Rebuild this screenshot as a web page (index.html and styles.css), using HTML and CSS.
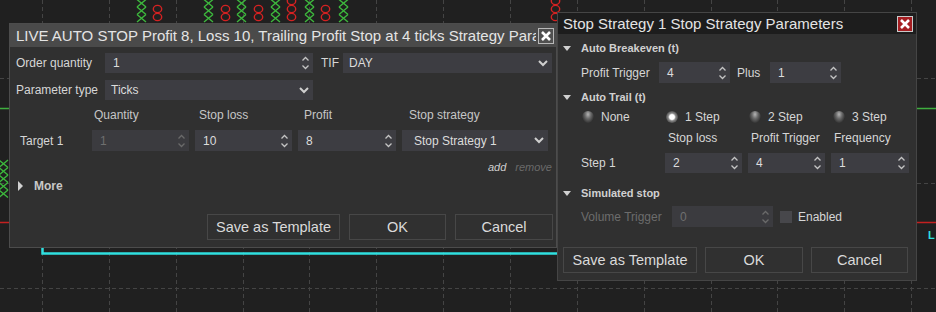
FILE: index.html
```html
<!DOCTYPE html>
<html lang="en">
<head>
  <meta charset="UTF-8">
  <title>Stop Strategy Parameters</title>
  <link rel="stylesheet" href="styles.css">
</head>
<body>
  <!-- chart behind the dialogs -->
  <svg class="chart" width="936" height="312" viewBox="0 0 936 312">
    <defs>
      <path id="px" d="M0 0 L9 7.5 M9 0 L0 7.5"/>
      <ellipse id="po" cx="4.5" cy="4" rx="4.2" ry="3.6"/>
    </defs>
    <g class="grid">
      <line x1="42.5" y1="0" x2="42.5" y2="312"/>
      <line x1="109.5" y1="0" x2="109.5" y2="312"/>
      <line x1="176.5" y1="0" x2="176.5" y2="312"/>
      <line x1="243.5" y1="0" x2="243.5" y2="312"/>
      <line x1="309.5" y1="0" x2="309.5" y2="312"/>
      <line x1="376.5" y1="0" x2="376.5" y2="312"/>
      <line x1="443.5" y1="0" x2="443.5" y2="312"/>
      <line x1="510.5" y1="0" x2="510.5" y2="312"/>
      <line x1="577.5" y1="0" x2="577.5" y2="312"/>
      <line x1="644.5" y1="0" x2="644.5" y2="312"/>
      <line x1="711.5" y1="0" x2="711.5" y2="312"/>
      <line x1="777.5" y1="0" x2="777.5" y2="312"/>
      <line x1="844.5" y1="0" x2="844.5" y2="312"/>
      <line x1="911.5" y1="0" x2="911.5" y2="312"/>
      <line x1="0" y1="78.5" x2="936" y2="78.5"/>
      <line x1="0" y1="183.5" x2="936" y2="183.5"/>
      <line x1="0" y1="288.5" x2="936" y2="288.5"/>
    </g>
    <line class="green-line" x1="0" y1="108.5" x2="936" y2="108.5"/>
    <line class="red-line" x1="0" y1="222.5" x2="936" y2="222.5"/>
    <polyline class="cyan-line" points="42.5,247 42.5,253.5 560,253.5"/>
    <text class="cyan-label" x="928" y="239">L</text>

    <g class="xs">
      <use href="#px" x="137" y="-0.5"/><use href="#px" x="137" y="7"/><use href="#px" x="137" y="14.5"/>
      <use href="#px" x="204" y="-0.5"/><use href="#px" x="204" y="7"/><use href="#px" x="204" y="14.5"/>
      <use href="#px" x="237" y="-0.5"/><use href="#px" x="237" y="7"/><use href="#px" x="237" y="14.5"/>
      <use href="#px" x="271" y="-0.5"/><use href="#px" x="271" y="7"/><use href="#px" x="271" y="14.5"/>
      <use href="#px" x="305" y="-0.5"/><use href="#px" x="305" y="7"/><use href="#px" x="305" y="14.5"/>
      <use href="#px" x="339" y="-0.5"/><use href="#px" x="339" y="7"/><use href="#px" x="339" y="14.5"/>
      <use href="#px" x="-1" y="160"/><use href="#px" x="-1" y="167.5"/><use href="#px" x="-1" y="175"/>
      <use href="#px" x="-1" y="182.5"/><use href="#px" x="-1" y="190"/>
    </g>
    <g class="os">
      <use href="#po" x="153" y="5"/><use href="#po" x="153" y="13"/>
      <use href="#po" x="221" y="5"/><use href="#po" x="221" y="13"/>
      <use href="#po" x="254" y="5"/><use href="#po" x="254" y="13"/>
      <use href="#po" x="287" y="-3"/><use href="#po" x="287" y="5"/><use href="#po" x="287" y="13"/>
      <use href="#po" x="321" y="5"/><use href="#po" x="321" y="13"/>
      <use href="#po" x="551" y="-3"/><use href="#po" x="551" y="5"/><use href="#po" x="551" y="13"/>
    </g>
  </svg>

  <!-- order dialog -->
  <div class="dialog order-dialog">
    <div class="title-bar">
      <span class="title">LIVE AUTO STOP Profit 8, Loss 10, Trailing Profit Stop at 4 ticks Strategy Parameters</span>
      <span class="close-button">
        <svg width="10" height="10" viewBox="0 0 10 10"><path d="M1 1 L9 9 M9 1 L1 9"/></svg>
      </span>
    </div>
    <div class="dialog-body">
      <div class="form-row">
        <span class="row-label">Order quantity</span>
        <div class="field spin w208">
          <span>1</span>
          <svg class="arrows" width="7" height="14" viewBox="0 0 7 14"><path d="M0.5 4.5 L3.5 1.5 L6.5 4.5 M0.5 9.5 L3.5 12.5 L6.5 9.5"/></svg>
        </div>
        <span class="tif-label">TIF</span>
        <div class="field select w209">
          <span>DAY</span>
          <svg class="chevron" width="10" height="7" viewBox="0 0 10 7"><path d="M1 1 L5 5 L9 1"/></svg>
        </div>
      </div>
      <div class="form-row gap7">
        <span class="row-label">Parameter type</span>
        <div class="field select w208">
          <span>Ticks</span>
          <svg class="chevron" width="10" height="7" viewBox="0 0 10 7"><path d="M1 1 L5 5 L9 1"/></svg>
        </div>
      </div>

      <div class="target-grid target-head">
        <span></span>
        <span>Quantity</span>
        <span>Stop loss</span>
        <span>Profit</span>
        <span>Stop strategy</span>
      </div>
      <div class="target-grid target-row">
        <span class="target-label">Target 1</span>
        <div class="field spin disabled">
          <span>1</span>
          <svg class="arrows" width="7" height="14" viewBox="0 0 7 14"><path d="M0.5 4.5 L3.5 1.5 L6.5 4.5 M0.5 9.5 L3.5 12.5 L6.5 9.5"/></svg>
        </div>
        <div class="field spin">
          <span>10</span>
          <svg class="arrows" width="7" height="14" viewBox="0 0 7 14"><path d="M0.5 4.5 L3.5 1.5 L6.5 4.5 M0.5 9.5 L3.5 12.5 L6.5 9.5"/></svg>
        </div>
        <div class="field spin">
          <span>8</span>
          <svg class="arrows" width="7" height="14" viewBox="0 0 7 14"><path d="M0.5 4.5 L3.5 1.5 L6.5 4.5 M0.5 9.5 L3.5 12.5 L6.5 9.5"/></svg>
        </div>
        <div class="field select roomy">
          <span>Stop Strategy 1</span>
          <svg class="chevron" width="10" height="7" viewBox="0 0 10 7"><path d="M1 1 L5 5 L9 1"/></svg>
        </div>
      </div>

      <div class="links">
        <span class="link">add</span>
        <span class="link off">remove</span>
      </div>
      <div class="more">
        <span class="tri-right"></span>
        <span>More</span>
      </div>

      <div class="buttons order-buttons">
        <span class="btn w133">Save as Template</span>
        <span class="btn w97">OK</span>
        <span class="btn w98">Cancel</span>
      </div>
    </div>
  </div>

  <!-- stop strategy dialog -->
  <div class="dialog strategy-dialog">
    <div class="title-bar dark">
      <span class="title">Stop Strategy 1 Stop Strategy Parameters</span>
      <span class="close-button red">
        <svg width="10" height="10" viewBox="0 0 10 10"><path d="M1 1 L9 9 M9 1 L1 9"/></svg>
      </span>
    </div>
    <div class="dialog-body strategy-body">
      <div class="section-head"><span class="tri-down"></span>Auto Breakeven (t)</div>
      <div class="form-row breakeven">
        <span class="pt-label">Profit Trigger</span>
        <div class="field spin w71">
          <span>4</span>
          <svg class="arrows" width="7" height="14" viewBox="0 0 7 14"><path d="M0.5 4.5 L3.5 1.5 L6.5 4.5 M0.5 9.5 L3.5 12.5 L6.5 9.5"/></svg>
        </div>
        <span class="plus-label">Plus</span>
        <div class="field spin w71">
          <span>1</span>
          <svg class="arrows" width="7" height="14" viewBox="0 0 7 14"><path d="M0.5 4.5 L3.5 1.5 L6.5 4.5 M0.5 9.5 L3.5 12.5 L6.5 9.5"/></svg>
        </div>
      </div>

      <div class="section-head gap4"><span class="tri-down"></span>Auto Trail (t)</div>
      <div class="trail-grid radios">
        <span class="radio-item first"><span class="radio"></span>None</span>
        <span class="radio-item"><span class="radio checked"></span>1 Step</span>
        <span class="radio-item"><span class="radio"></span>2 Step</span>
        <span class="radio-item far"><span class="radio"></span>3 Step</span>
      </div>
      <div class="trail-grid trail-head">
        <span></span>
        <span>Stop loss</span>
        <span>Profit Trigger</span>
        <span>Frequency</span>
      </div>
      <div class="trail-grid trail-row">
        <span class="step-label">Step 1</span>
        <div class="field spin">
          <span>2</span>
          <svg class="arrows" width="7" height="14" viewBox="0 0 7 14"><path d="M0.5 4.5 L3.5 1.5 L6.5 4.5 M0.5 9.5 L3.5 12.5 L6.5 9.5"/></svg>
        </div>
        <div class="field spin">
          <span>4</span>
          <svg class="arrows" width="7" height="14" viewBox="0 0 7 14"><path d="M0.5 4.5 L3.5 1.5 L6.5 4.5 M0.5 9.5 L3.5 12.5 L6.5 9.5"/></svg>
        </div>
        <div class="field spin">
          <span>1</span>
          <svg class="arrows" width="7" height="14" viewBox="0 0 7 14"><path d="M0.5 4.5 L3.5 1.5 L6.5 4.5 M0.5 9.5 L3.5 12.5 L6.5 9.5"/></svg>
        </div>
      </div>

      <div class="section-head gap10"><span class="tri-down"></span>Simulated stop</div>
      <div class="form-row volume">
        <span class="vol-label">Volume Trigger</span>
        <div class="field spin disabled w101">
          <span>0</span>
          <svg class="arrows" width="7" height="14" viewBox="0 0 7 14"><path d="M0.5 4.5 L3.5 1.5 L6.5 4.5 M0.5 9.5 L3.5 12.5 L6.5 9.5"/></svg>
        </div>
        <span class="checkbox"></span>
        <span>Enabled</span>
      </div>

      <div class="buttons strategy-buttons">
        <span class="btn w134">Save as Template</span>
        <span class="btn w98">OK</span>
        <span class="btn w97">Cancel</span>
      </div>
    </div>
  </div>
</body>
</html>
```

FILE: styles.css
```css
body {
  margin: 0;
  width: 936px;
  height: 312px;
  position: relative;
  overflow: hidden;
  background: #202020;
  color: #d6d6d6;
  font-family: "Liberation Sans", Arial, sans-serif;
  font-size: 12px;
}

/* chart */

.chart {
  position: absolute;
  left: 0;
  top: 0;
}

.grid line {
  stroke: #444;
  stroke-width: 1;
  stroke-dasharray: 4 3;
}

.green-line {
  stroke: #3fae3f;
  stroke-width: 1.5;
}

.red-line {
  stroke: #c42020;
  stroke-width: 1.5;
}

.cyan-line {
  fill: none;
  stroke: #2fe0e0;
  stroke-width: 2.5;
}

.cyan-label {
  fill: #2fe0e0;
  font-family: "Liberation Sans", Arial, sans-serif;
  font-size: 11px;
  font-weight: bold;
}

.xs use {
  fill: none;
  stroke: #3db83d;
  stroke-width: 1.4;
}

.os use {
  fill: none;
  stroke: #d42222;
  stroke-width: 1.4;
}

/* dialogs */

.dialog {
  position: absolute;
  box-sizing: border-box;
  display: flex;
  flex-direction: column;
  background: #303030;
  border: 1px solid #4c4c4c;
}

.order-dialog {
  left: 9px;
  top: 23px;
  width: 548px;
  height: 225px;
}

.strategy-dialog {
  left: 557px;
  top: 12px;
  width: 360px;
  height: 269px;
  border-color: #454545;
}

.title-bar {
  display: flex;
  align-items: center;
  height: 23px;
  padding-left: 6px;
  background: #4a4a4a;
}

.title-bar.dark {
  height: 21px;
  padding-left: 5px;
  background: #1d1d1d;
}

.title {
  flex: 1;
  overflow: hidden;
  white-space: nowrap;
  font-size: 15px;
  color: #e4e4e4;
}

.close-button {
  box-sizing: border-box;
  width: 16px;
  height: 16px;
  margin: 0 2px 0 2px;
  display: flex;
  align-items: center;
  justify-content: center;
  background: #505050;
  border: 1px solid #b8b8b8;
}

.close-button.red {
  margin-right: 3px;
  background: #a51e22;
  border-color: #c9c9c9;
}

.close-button path {
  stroke: #fff;
  stroke-width: 2.6;
}

.dialog-body {
  display: flex;
  flex-direction: column;
  padding: 6px 0 7px 0;
}

.strategy-body {
  padding-top: 4px;
}

/* rows */

.form-row {
  display: flex;
  align-items: center;
  height: 20px;
  padding-left: 6px;
}

.form-row.gap7 {
  margin-top: 7px;
}

.row-label {
  width: 89px;
}

.tif-label {
  width: 22px;
  margin-left: 8px;
}

.field {
  box-sizing: border-box;
  height: 100%;
  display: flex;
  align-items: center;
  justify-content: space-between;
  padding: 0 4px 0 8px;
  background: #3d3d42;
  color: #dcdcdc;
}

.field.select {
  padding-left: 6px;
}

.field.roomy {
  padding-left: 12px;
}

.field.disabled {
  background: #3b3b3f;
  color: #6f6f6f;
}

.arrows path {
  fill: none;
  stroke: #c4c4c4;
  stroke-width: 1.3;
}

.disabled .arrows path {
  stroke: #6a6a6a;
}

.chevron path {
  fill: none;
  stroke: #cfcfcf;
  stroke-width: 2;
}

.w71 { width: 71px; }
.w101 { width: 101px; }
.w208 { width: 208px; }
.w209 { width: 209px; }

/* targets */

.target-grid {
  display: grid;
  grid-template-columns: 76px 97px 97px 98px 146px;
  column-gap: 6px;
  align-items: center;
}

.target-head {
  height: 30px;
  color: #c6c6c6;
}

.target-head span:nth-child(2) { padding-left: 2px; }
.target-head span:nth-child(3) { padding-left: 4px; }
.target-head span:nth-child(4) { padding-left: 6px; }
.target-head span:nth-child(5) { padding-left: 7px; }

.target-row {
  height: 21px;
}

.target-label {
  padding-left: 10px;
}

.links {
  display: flex;
  justify-content: flex-end;
  align-items: center;
  gap: 9px;
  height: 18px;
  margin-top: 7px;
  padding-right: 4px;
  font-size: 11px;
  font-style: italic;
}

.link {
  color: #cfcfcf;
}

.link.off {
  color: #6a6a6a;
}

.more {
  display: flex;
  align-items: center;
  height: 20px;
  padding-left: 8px;
  font-weight: bold;
  font-size: 12px;
  color: #c8c8c8;
}

.tri-right {
  width: 0;
  height: 0;
  margin-right: 11px;
  border-top: 5px solid transparent;
  border-bottom: 5px solid transparent;
  border-left: 5px solid #d0d0d0;
}

/* buttons */

.buttons {
  display: flex;
  height: 26px;
  margin-top: 18px;
}

.order-buttons {
  justify-content: flex-end;
  gap: 9px;
  padding-right: 3px;
}

.strategy-buttons {
  gap: 8px;
  margin-top: 20px;
  padding-left: 5px;
}

.btn {
  box-sizing: border-box;
  display: flex;
  align-items: center;
  justify-content: center;
  border: 1px solid #474747;
  font-size: 14.5px;
  color: #dadada;
}

.w97 { width: 97px; }
.w98 { width: 98px; }
.w133 { width: 133px; }
.w134 { width: 134px; }

/* stop strategy */

.section-head {
  display: flex;
  align-items: center;
  height: 20px;
  padding-left: 5px;
  font-weight: bold;
  font-size: 11px;
  color: #d0d0d0;
}

.section-head.gap4 {
  margin-top: 4px;
}

.section-head.gap10 {
  margin-top: 10px;
}

.tri-down {
  width: 0;
  height: 0;
  margin-right: 10px;
  border-left: 4px solid transparent;
  border-right: 4px solid transparent;
  border-top: 5px solid #d0d0d0;
}

.breakeven {
  height: 21px;
  margin-top: 4px;
  padding-left: 23px;
}

.pt-label {
  width: 78px;
}

.plus-label {
  width: 33px;
  margin-left: 7px;
}

.trail-grid {
  display: grid;
  grid-template-columns: 101px 77px 77px 78px;
  column-gap: 6px;
  align-items: center;
  height: 20px;
}

.radio-item {
  display: flex;
  align-items: center;
  gap: 7px;
  padding-left: 1px;
}

.radio-item.first {
  padding-left: 24px;
}

.radio-item.far {
  padding-left: 2px;
}

.radio {
  width: 12px;
  height: 12px;
  border-radius: 50%;
  background: radial-gradient(ellipse at 50% 28%, #b4b4b4 0%, #6a6a6a 35%, #2e2e2e 75%, #1e1e1e 100%);
}

.radio.checked {
  background: radial-gradient(circle at 50% 50%, #ffffff 0%, #ffffff 28%, #8a8a8a 45%, #3a3a3a 80%, #222 100%);
}

.trail-head {
  margin-top: 1px;
}

.trail-head span {
  padding-left: 3px;
}

.trail-row {
  margin-top: 5px;
}

.step-label {
  padding-left: 23px;
}

.volume {
  height: 21px;
  margin-top: 3px;
  padding-left: 23px;
}

.vol-label {
  width: 91px;
  color: #6c6c6c;
}

.checkbox {
  width: 12px;
  height: 12px;
  margin: 0 6px 0 7px;
  background: #47474b;
}
```
